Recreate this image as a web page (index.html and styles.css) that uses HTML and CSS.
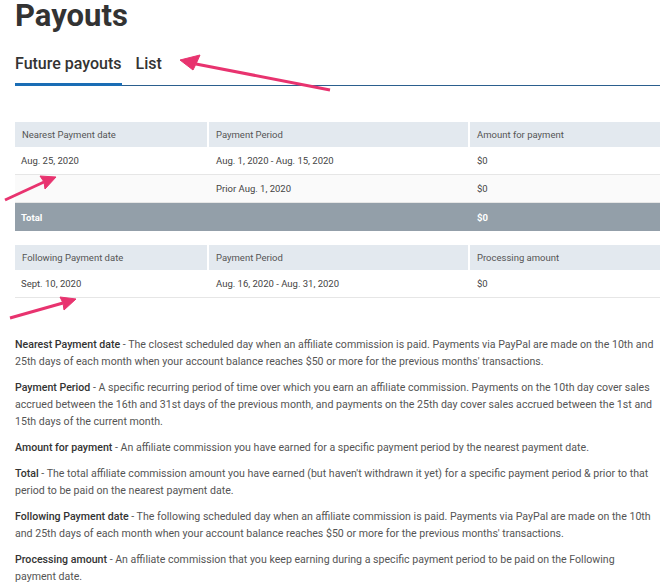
FILE: index.html
```
<!DOCTYPE html>
<html lang="en">
<head>
    <meta charset="UTF-8">
    <meta name="viewport" content="width=device-width, initial-scale=1.0">
    <title>Payouts</title>
    <link rel="stylesheet" href="styles.css">
</head>
<body>
    <h1 class="page-title">Payouts</h1>

    <div class="tabs">
        <span class="tab active">Future payouts</span>
        <span class="tab">List</span>
    </div>

    <table class="payouts">
        <thead>
            <tr>
                <th class="col-date">Nearest Payment date</th>
                <th class="col-period">Payment Period</th>
                <th>Amount for payment</th>
            </tr>
        </thead>
        <tbody>
            <tr>
                <td>Aug. 25, 2020</td>
                <td>Aug. 1, 2020 - Aug. 15, 2020</td>
                <td>$0</td>
            </tr>
            <tr class="prior">
                <td></td>
                <td>Prior Aug. 1, 2020</td>
                <td>$0</td>
            </tr>
            <tr class="total">
                <td>Total</td>
                <td></td>
                <td>$0</td>
            </tr>
        </tbody>
    </table>

    <table class="payouts following">
        <thead>
            <tr>
                <th class="col-date">Following Payment date</th>
                <th class="col-period">Payment Period</th>
                <th>Processing amount</th>
            </tr>
        </thead>
        <tbody>
            <tr>
                <td>Sept. 10, 2020</td>
                <td>Aug. 16, 2020 - Aug. 31, 2020</td>
                <td>$0</td>
            </tr>
        </tbody>
    </table>

    <div class="glossary">
        <p><b>Nearest Payment date</b> - The closest scheduled day when an affiliate commission is paid. Payments via PayPal are made on the 10th and 25th days of each month when your account balance reaches $50 or more for the previous months' transactions.</p>
        <p><b>Payment Period</b> - A specific recurring period of time over which you earn an affiliate commission. Payments on the 10th day cover sales accrued between the 16th and 31st days of the previous month, and payments on the 25th day cover sales accrued between the 1st and 15th days of the current month.</p>
        <p><b>Amount for payment</b> - An affiliate commission you have earned for a specific payment period by the nearest payment date.</p>
        <p><b>Total</b> - The total affiliate commission amount you have earned (but haven't withdrawn it yet) for a specific payment period &amp; prior to that period to be paid on the nearest payment date.</p>
        <p><b>Following Payment date</b> - The following scheduled day when an affiliate commission is paid. Payments via PayPal are made on the 10th and 25th days of each month when your account balance reaches $50 or more for the previous months' transactions.</p>
        <p><b>Processing amount</b> - An affiliate commission that you keep earning during a specific payment period to be paid on the Following payment date.</p>
    </div>

    <!-- annotation arrows drawn over the screenshot -->
    <svg class="arrows" width="665" height="585" viewBox="0 0 665 585">
        <g fill="#e8336f" stroke="#e8336f" stroke-linejoin="round">
            <path d="M330 90 L196 64" stroke-width="3" fill="none"/>
            <path d="M180 60 L200 55 L196 64 L193 70 Z" stroke-width="1"/>
            <path d="M5 200 L44 182" stroke-width="3" fill="none"/>
            <path d="M56 177 L40 176 L44 182 L45 189 Z" stroke-width="1"/>
            <path d="M10 318 L63 303" stroke-width="3" fill="none"/>
            <path d="M76 299 L60 297 L63 303 L64 310 Z" stroke-width="1"/>
        </g>
    </svg>
</body>
</html>
```

FILE: styles.css
```
body {
    margin: 0;
    padding: 0 5px 0 15px;
    font-family: Roboto, "Liberation Sans", Arial, sans-serif;
    color: #555;
    background: #fff;
    position: relative;
}
.page-title {
    margin: 0;
    font-size: 31px;
    line-height: 32px;
    font-weight: 700;
    color: #333;
}
.tabs {
    display: flex;
    gap: 14px;
    margin-top: 22px;
    border-bottom: 1px solid #2b5f8e;
}
.tab {
    font-size: 16px;
    font-weight: 500;
    color: #333;
    padding-bottom: 10px;
}
.tab.active {
    border-bottom: 3px solid #1a6db5;
    margin-bottom: -1px;
}
.payouts {
    width: 100%;
    border-collapse: collapse;
    margin-top: 36px;
    font-size: 9.5px;
}
.payouts.following {
    margin-top: 14px;
}
.payouts th {
    background: #e3e9ef;
    font-weight: 400;
    text-align: left;
    color: #555;
    height: 25px;
    padding: 0 7px;
    border-left: 2px solid #fff;
}
.payouts th:first-child {
    border-left: none;
}
.col-date {
    width: 178px;
}
.col-period {
    width: 245px;
}
.payouts td {
    height: 27px;
    padding: 0 6px;
    color: #444;
    border-bottom: 1px solid #e6e6e6;
}
.payouts td + td {
    padding-left: 8px;
}
.payouts .prior td {
    background: #fafafa;
}
.payouts .total td {
    background: #939fa9;
    color: #fff;
    font-weight: 700;
    height: 28px;
    border-bottom: none;
}
.glossary {
    margin-top: 38px;
    padding-right: 5px;
}
.glossary p {
    margin: 0 0 9px;
    font-size: 10.6px;
    line-height: 17px;
    color: #555;
}
.glossary b {
    font-weight: 500;
    color: #333;
}
.arrows {
    position: absolute;
    left: 0;
    top: 0;
    pointer-events: none;
}
```
